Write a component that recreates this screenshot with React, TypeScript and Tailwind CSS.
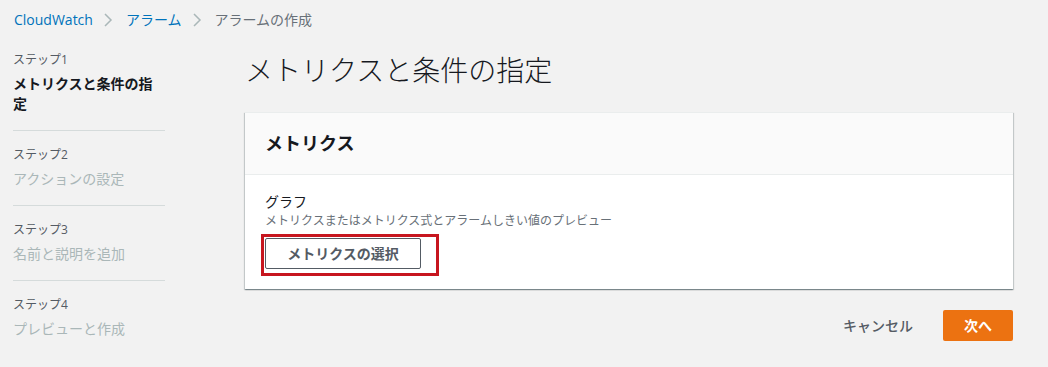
import React from "react";

const Chevron = () => (
  <svg width="10" height="16" viewBox="0 0 10 16" className="ml-[10px] mr-[13px]" fill="none">
    <polyline points="2,2 8,8 2,14" stroke="#aab7b8" strokeWidth="1.5" />
  </svg>
);

const steps = [
  { label: "ステップ1", title: "メトリクスと条件の指定", active: true },
  { label: "ステップ2", title: "アクションの設定", active: false },
  { label: "ステップ3", title: "名前と説明を追加", active: false },
  { label: "ステップ4", title: "プレビューと作成", active: false },
];

export default function App() {
  return (
    <div
      className="w-[1048px] h-[367px] bg-[#f2f2f2] overflow-hidden flex flex-col"
      style={{ fontFamily: '"Open Sans", "Noto Sans CJK JP", sans-serif' }}
    >
      <div className="flex items-center pl-[14px] pt-[10px] h-[30px] text-[14px] leading-[20px]">
        <span className="text-[#0073bb]">CloudWatch</span>
        <Chevron />
        <span className="text-[#0073bb]">アラーム</span>
        <Chevron />
        <span className="text-[#687078]">アラームの作成</span>
      </div>

      <div className="flex">
        <div className="ml-[13px] w-[152px] mt-[20px] flex flex-col">
          {steps.map((s, i) => (
            <div key={s.label} className="flex flex-col">
              <div className={i === 0 ? "" : "pt-[14px]"}>
                <div className="text-[12px] leading-[20px] text-[#545b64]">{s.label}</div>
                <div
                  className={
                    "mt-[4px] text-[14px] leading-[20px] " +
                    (s.active ? "font-bold text-[#16191f]" : "text-[#aab7b8]")
                  }
                >
                  {s.title}
                </div>
              </div>
              {i < steps.length - 1 && <div className="mt-[16px] h-px bg-[#d5dbdb]" />}
            </div>
          ))}
        </div>

        <div className="ml-[80px] w-[768px] flex flex-col">
          <h1 className="mt-[22px] text-[28px] leading-[36px] text-[#16191f] font-light">
            メトリクスと条件の指定
          </h1>
          <div className="mt-[24px] bg-white shadow-[0_1px_1px_0_rgba(0,28,36,0.3),1px_1px_1px_0_rgba(0,28,36,0.15),-1px_1px_1px_0_rgba(0,28,36,0.15)] border-t border-[#eaeded]">
            <div className="h-[62px] bg-[#fafafa] border-b border-[#eaeded] flex items-center px-[20px]">
              <span className="text-[18px] font-bold text-[#16191f]">メトリクス</span>
            </div>
            <div className="px-[20px] pt-[17px] pb-[20px]">
              <div className="text-[14px] leading-[20px] text-[#16191f]">グラフ</div>
              <div className="text-[12px] leading-[18px] text-[#687078]">
                メトリクスまたはメトリクス式とアラームしきい値のプレビュー
              </div>
              <div className="relative mt-[8px] w-[156px]">
                <button className="w-[156px] h-[31px] bg-white border border-[#545b64] rounded-[2px] text-[14px] font-bold text-[#545b64]">
                  メトリクスの選択
                </button>
                <div className="absolute -left-[4px] -top-[4px] w-[178px] h-[42px] border-[3px] border-[#c7161f] pointer-events-none" />
              </div>
            </div>
          </div>
          <div className="mt-[21px] flex items-center justify-end">
            <span className="text-[14px] font-medium text-[#545b64] mr-[30px]">キャンセル</span>
            <button className="w-[70px] h-[31px] bg-[#ec7211] rounded-[2px] text-white text-[14px] font-bold">
              次へ
            </button>
          </div>
        </div>
      </div>
    </div>
  );
}
